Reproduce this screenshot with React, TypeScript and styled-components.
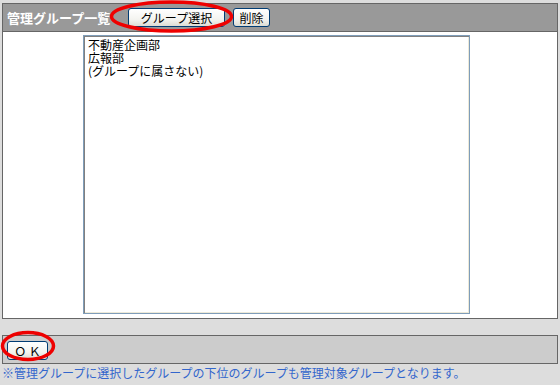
import React from 'react'
import styled, { createGlobalStyle } from 'styled-components'

const GlobalStyle = createGlobalStyle`
  html, body {
    margin: 0;
    padding: 0;
    background: #dddddd;
  }
  body {
    font-family: 'Noto Sans CJK JP', 'Liberation Sans', sans-serif;
    font-size: 12px;
  }
`

const groups = ['不動産企画部', '広報部', '(グループに属さない)']

const App: React.FC = () => {
  return (
    <StyledPage>
      <GlobalStyle />
      <StyledPanel>
        <StyledHeader>
          <StyledTitle>管理グループ一覧</StyledTitle>
          <StyledButton width={97}>グループ選択</StyledButton>
          <StyledButton width={37}>削除</StyledButton>
        </StyledHeader>
        <StyledBody>
          <StyledList>
            {groups.map((g) => (
              <StyledOption key={g}>{g}</StyledOption>
            ))}
          </StyledList>
        </StyledBody>
      </StyledPanel>
      <StyledFooter>
        <StyledButton width={41}>Ｏ Ｋ</StyledButton>
      </StyledFooter>
      <StyledNote>
        ※管理グループに選択したグループの下位のグループも管理対象グループとなります。
      </StyledNote>
      {/* red marks drawn over the screenshot */}
      <StyledMarks width="560" height="385" viewBox="0 0 560 385">
        <ellipse cx="171.5" cy="16.5" rx="60" ry="14.5" />
        <ellipse cx="28" cy="346" rx="25.5" ry="13.5" />
      </StyledMarks>
    </StyledPage>
  )
}

const StyledPage = styled.div`
  position: relative;
  width: 560px;
  height: 385px;
  padding: 3px 0 0 2px;
  box-sizing: border-box;
`

const StyledPanel = styled.div`
  width: 556px;
  display: flex;
  flex-direction: column;
  border: 1px solid #666666;
  box-sizing: border-box;
`

const StyledHeader = styled.div`
  height: 28px;
  display: flex;
  align-items: center;
  gap: 8px;
  padding: 0 0 1px 4px;
  background: #999999;
  border-bottom: 1px solid #666666;
  box-sizing: border-box;
`

const StyledTitle = styled.div`
  color: #ffffff;
  font-weight: bold;
  font-size: 13px;
  width: 113px;
  white-space: nowrap;
`

const StyledButton = styled.button<{ width: number }>`
  width: ${(p) => p.width}px;
  height: 19px;
  padding: 0;
  font-family: 'Noto Sans CJK JP', 'Liberation Sans', sans-serif;
  font-size: 12px;
  line-height: 15px;
  color: #000000;
  background: linear-gradient(#ffffff, #f4f4f0 60%, #dcdcd4);
  border: 1px solid #003c74;
  border-radius: 3px;
  white-space: nowrap;
`

const StyledBody = styled.div`
  height: 286px;
  background: #ffffff;
  display: flex;
  padding: 3px 0 0 80px;
  box-sizing: border-box;
`

const StyledList = styled.div`
  width: 387px;
  height: 279px;
  border: 1px solid #7f9db9;
  box-shadow: inset 1px 1px 0 #808080, inset -1px -1px 0 #ece9d8;
  padding: 2px 4px;
  box-sizing: border-box;
  background: #ffffff;
`

const StyledOption = styled.div`
  font-size: 12px;
  line-height: 13px;
  color: #000000;
  white-space: nowrap;
`

const StyledFooter = styled.div`
  width: 556px;
  height: 29px;
  margin-top: 16px;
  display: flex;
  align-items: center;
  padding: 1px 0 0 4px;
  background: #cccccc;
  border: 1px solid #666666;
  box-sizing: border-box;
`

const StyledNote = styled.div`
  color: #3366cc;
  font-size: 12px;
  line-height: 15px;
  margin-top: 1px;
  white-space: nowrap;
`

const StyledMarks = styled.svg`
  position: absolute;
  left: 0;
  top: 0;
  pointer-events: none;
  ellipse {
    fill: none;
    stroke: #ee0000;
    stroke-width: 3.5;
  }
`

export default App
